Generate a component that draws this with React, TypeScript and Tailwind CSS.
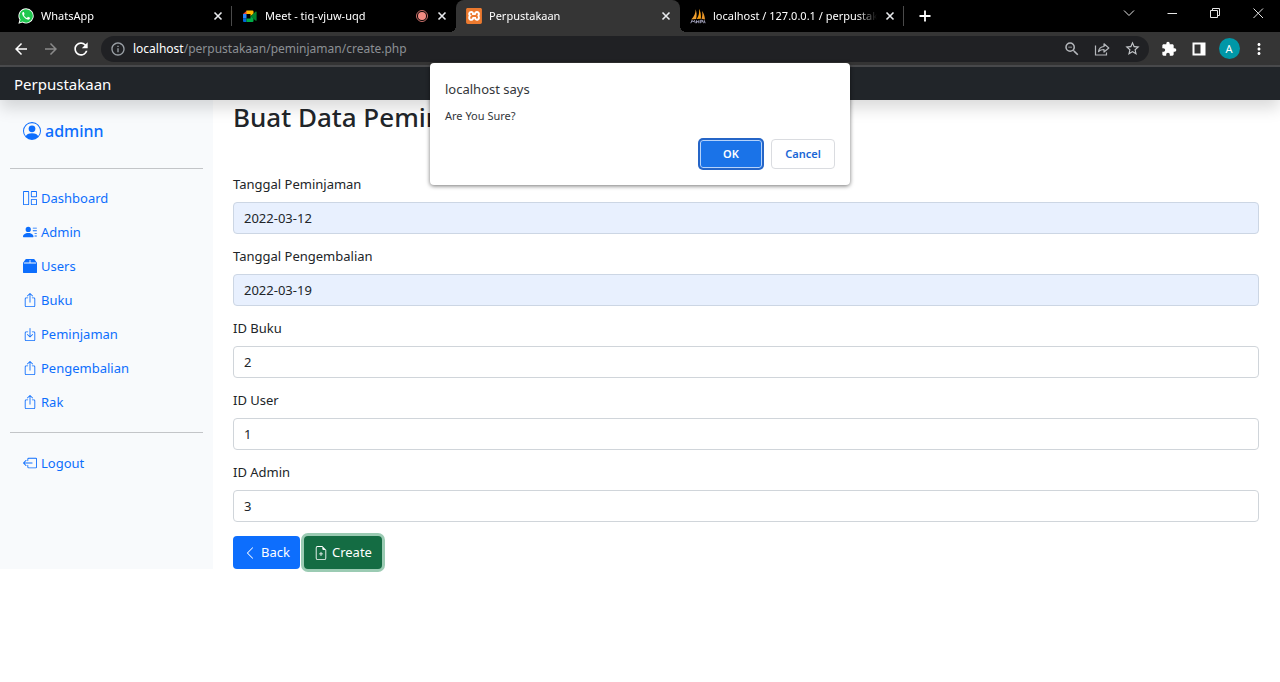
import type { ReactNode } from "react";
import {
  BsBox2Fill,
  BsBoxArrowInDown,
  BsBoxArrowLeft,
  BsBoxArrowUp,
  BsChevronLeft,
  BsFileEarmarkPlus,
  BsGrid1X2,
  BsPersonCircle,
  BsPersonLinesFill,
} from "react-icons/bs";
import {
  MdArrowBack,
  MdArrowForward,
  MdExtension,
  MdInfoOutline,
  MdMoreVert,
  MdRefresh,
  MdStarBorder,
  MdZoomOut,
} from "react-icons/md";
import { SiXampp } from "react-icons/si";

function WhatsAppLogo() {
  return (
    <svg viewBox="0 0 16 16" className="size-4 shrink-0" aria-hidden="true">
      <path d="M8.1.3a7.6 7.6 0 0 0-6.6 11.4L.4 15.7l4.1-1.1A7.6 7.6 0 1 0 8.1.3z" fill="#fff" />
      <path d="M8.1 1.2a6.7 6.7 0 0 0-5.6 10.4l-.8 2.8 2.9-.8A6.7 6.7 0 1 0 8.1 1.2z" fill="#1fc84f" />
      <path
        d="M5.9 4.3c-.2-.4-.4-.4-.7-.3-.8.4-1.2 1.2-1 2.1.5 2.4 2.7 4.7 5.2 5.5 1.3.4 2.3-.2 2.6-1.3.1-.4 0-.5-.3-.7l-1.4-.7c-.3-.1-.4 0-.6.2l-.5.7c-.2.2-.3.2-.6.1C7.3 9.3 6.4 8.4 5.9 7.3c-.1-.2 0-.4.1-.5l.5-.6c.1-.2.1-.3 0-.5z"
        fill="#fff"
      />
    </svg>
  );
}

function MeetLogo() {
  return (
    <svg viewBox="0 0 16 16" className="size-4 shrink-0" aria-hidden="true">
      <path d="M1 6 5 2.500V6z" fill="#ea4335" />
      <path d="M1 6h3.500v4.500H1z" fill="#2684fc" />
      <path d="M1 10.500h3.500V14H2a1 1 0 0 1-1-1z" fill="#0066da" />
      <path d="M4.500 2.500h6a1 1 0 0 1 1 1V6L8.500 8V6h-4z" fill="#ffba00" />
      <path d="M4.500 10.500h4V8l3 2.500V13a1 1 0 0 1-1 1h-6z" fill="#00ac47" />
      <path d="m8.500 8.200 5.200-4.600c.4-.3.900-.1.900.4v8.300c0 .5-.5.7-.9.4z" fill="#00832d" />
    </svg>
  );
}

function XamppLogo() {
  return (
    <span className="flex size-4 shrink-0 items-center justify-center rounded-sm bg-[linear-gradient(#fff,#fff)] bg-[length:12px_12px] bg-center bg-no-repeat">
      <SiXampp size={16} color="#ec7a2f" aria-hidden="true" />
    </span>
  );
}

function PhpMyAdminLogo() {
  return (
    <svg viewBox="0 0 16 16" className="size-4 shrink-0" aria-hidden="true">
      <path d="M5.600 1.200C5.700 5 4.200 8.500 1.200 11.500l4.900-.6c.8-3.200.7-6.500-.5-9.700z" fill="#f0a030" />
      <path d="M9 .8c.5 4-.2 7.400-2.300 10.200l4.200-.2C11.200 7 10.600 3.500 9 .8z" fill="#f89c0e" />
      <path d="M12 3c.6 2.800.4 5.400-.5 7.800l3.500.7C14.700 8.200 13.800 5.200 12 3z" fill="#e8962b" />
      <path
        d="M.8 15.200 2 12.300l1.200 1.700 1.300-1.700.8 2.900M6.500 15.200v-2.900M6.500 13.700h2.300M8.800 12.300v2.900M10.300 15.200v-2.900h2.200v1.600h-2M13.600 15.200l.7-2.700.8 2.700"
        fill="none"
        stroke="#9b9bb4"
        strokeWidth="1"
      />
    </svg>
  );
}

function RecordingDot() {
  return (
    <svg viewBox="0 0 14 14" className="size-3.5 shrink-0" role="img" aria-label="Recording">
      <circle cx="7" cy="7" r="5.500" fill="none" stroke="#c9706a" strokeWidth="1" />
      <circle cx="7" cy="7" r="4" fill="#f28b82" />
    </svg>
  );
}

function CrossIcon() {
  return (
    <svg viewBox="0 0 10 10" className="size-2.5" aria-hidden="true">
      <path d="m1.500 1.500 7 7m0-7-7 7" stroke="#e8eaed" strokeWidth="1.600" />
    </svg>
  );
}

type TabProps = {
  logo: ReactNode;
  title: string;
  active?: boolean;
  divider?: boolean;
  recording?: boolean;
};

function BrowserTab({ logo, title, active, divider, recording }: TabProps) {
  const look = active
    ? "rounded-t-lg bg-[#353535] before:absolute before:bottom-0 before:-left-1.5 before:size-1.5 before:bg-[radial-gradient(circle_at_top_left,transparent_6px,#353535_6px)] after:absolute after:bottom-0 after:-right-1.5 after:size-1.5 after:bg-[radial-gradient(circle_at_top_right,transparent_6px,#353535_6px)]"
    : "";
  return (
    <div className={`relative flex h-8 w-56 min-w-0 items-center pl-2.5 ${look}`}>
      {logo}
      <span className="ml-[7px] min-w-0 flex-1 overflow-hidden text-[11px] leading-4 whitespace-nowrap text-white [mask-image:linear-gradient(to_right,#000_88%,transparent)]">
        {title}
      </span>
      {recording && <RecordingDot />}
      <button type="button" aria-label={`Close ${title}`} className="flex w-[26px] shrink-0 justify-center">
        <CrossIcon />
      </button>
      <span className={`h-5 w-px ${divider ? "bg-[#4a4a4a]" : ""}`} />
    </div>
  );
}

function WindowButton({ label, children }: { label: string; children: ReactNode }) {
  return (
    <button type="button" aria-label={label} className="flex w-[43px] justify-center">
      <svg viewBox="0 0 12 12" className="size-3" fill="none" stroke="#e6e6e6" strokeWidth="1" aria-hidden="true">
        {children}
      </svg>
    </button>
  );
}

function TitleBar() {
  return (
    <div className="flex h-8 items-center bg-black pl-2">
      <BrowserTab logo={<WhatsAppLogo />} title="WhatsApp" divider />
      <BrowserTab logo={<MeetLogo />} title="Meet - tiq-vjuw-uqd" recording />
      <BrowserTab logo={<XamppLogo />} title="Perpustakaan" active />
      <BrowserTab logo={<PhpMyAdminLogo />} title="localhost / 127.0.0.1 / perpustakaan" divider />
      <button type="button" aria-label="New tab" className="flex w-[42px] justify-center">
        <svg viewBox="0 0 12 12" className="size-3" aria-hidden="true">
          <path d="M6 .5v11M.5 6h11" stroke="#fff" strokeWidth="1.800" />
        </svg>
      </button>
      <div className="ml-auto flex pr-px pb-1.5">
        <WindowButton label="Search tabs">
          <path d="m1 3.500 5 5 5-5" />
        </WindowButton>
        <WindowButton label="Minimize">
          <path d="M1.500 6.500h9.500" />
        </WindowButton>
        <WindowButton label="Restore">
          <path d="M1.500 3.500h7v7h-7zM3.500 3.500v-2h7v7h-2" />
        </WindowButton>
        <WindowButton label="Close">
          <path d="m1.500 1.500 9.500 9.500m0-9.500-9.500 9.500" />
        </WindowButton>
      </div>
    </div>
  );
}

function ToolButton({ label, children }: { label: string; children: ReactNode }) {
  return (
    <button type="button" aria-label={label} className="flex w-[30px] shrink-0 items-center justify-center">
      {children}
    </button>
  );
}

function Toolbar() {
  return (
    <div className="flex h-[35px] items-center border-b-2 border-[#4a4b4d] bg-[#353535] px-1.5 text-white">
      <ToolButton label="Back"><MdArrowBack size={18} /></ToolButton>
      <ToolButton label="Forward"><MdArrowForward size={18} className="text-[#8a8a8a]" /></ToolButton>
      <ToolButton label="Reload"><MdRefresh size={20} /></ToolButton>
      <div className="mx-[5px] flex h-[26px] min-w-0 flex-1 items-center rounded-full bg-[#202124] pr-0.5 pl-[9px] text-[#9aa0a6]">
        <MdInfoOutline size={16} className="shrink-0" />
        <p className="ml-[7px] min-w-0 flex-1 truncate text-xs leading-5 text-[#8c9094]">
          <span className="text-white">localhost</span>/perpustakaan/peminjaman/create.php
        </p>
        <ToolButton label="Zoom"><MdZoomOut size={18} className="text-[#b5b8bc]" /></ToolButton>
        <ToolButton label="Share">
          <svg viewBox="0 0 16 16" className="size-4" fill="none" stroke="#b5b8bc" strokeWidth="1.200" aria-hidden="true">
            <path d="M1.500 4.500v9.500h11v-2.500" />
            <path d="M4.500 10.500c.5-3.200 2.500-4.800 5.500-5V2.800l4.800 4.200L10 11V8.500c-2.500 0-4.200.6-5.500 2z" strokeLinejoin="round" />
          </svg>
        </ToolButton>
        <ToolButton label="Bookmark"><MdStarBorder size={17} className="text-[#c4c7ca]" /></ToolButton>
      </div>
      <ToolButton label="Extensions"><MdExtension size={16} /></ToolButton>
      <ToolButton label="Side panel">
        <svg viewBox="0 0 14 14" className="size-3.5" aria-hidden="true">
          <path d="M.5.500h13v13H.5zM2.500 2.500v9h6v-9z" fill="#fff" fillRule="evenodd" />
        </svg>
      </ToolButton>
      <ToolButton label="Profile">
        <span className="flex size-[21px] items-center justify-center rounded-full bg-[#0097a7] text-[11px] leading-none">A</span>
      </ToolButton>
      <ToolButton label="Menu"><MdMoreVert size={18} /></ToolButton>
    </div>
  );
}

const links = [
  { label: "Dashboard", icon: <BsGrid1X2 size={14} /> },
  { label: "Admin", icon: <BsPersonLinesFill size={14} /> },
  { label: "Users", icon: <BsBox2Fill size={14} /> },
  { label: "Buku", icon: <BsBoxArrowUp size={14} /> },
  { label: "Peminjaman", icon: <BsBoxArrowInDown size={14} /> },
  { label: "Pengembalian", icon: <BsBoxArrowUp size={14} /> },
  { label: "Rak", icon: <BsBoxArrowUp size={14} /> },
];

function NavLink({ label, icon }: { label: string; icon: ReactNode }) {
  return (
    <a href="#" className="flex h-[34px] items-center gap-1 px-[13px] text-[13px] leading-5">
      {icon}
      {label}
    </a>
  );
}

function Sidebar() {
  return (
    <aside className="w-[213px] shrink-0 bg-[#f8fafc] px-2.5 pt-4 text-[#0d6efd]">
      <a href="#" className="flex h-[30px] items-center gap-1 px-[13px] text-base font-medium">
        <BsPersonCircle size={18} />
        adminn
      </a>
      <hr className="mt-[22px] mb-3 border-[#c3c5c8]" />
      <nav>
        {links.map((link) => (
          <NavLink key={link.label} label={link.label} icon={link.icon} />
        ))}
      </nav>
      <hr className="my-[13px] border-[#c3c5c8]" />
      <NavLink label="Logout" icon={<BsBoxArrowLeft size={14} />} />
    </aside>
  );
}

const fields = [
  { id: "tanggal-peminjaman", label: "Tanggal Peminjaman", value: "2022-03-12", filled: true },
  { id: "tanggal-pengembalian", label: "Tanggal Pengembalian", value: "2022-03-19", filled: true },
  { id: "id-buku", label: "ID Buku", value: "2", filled: false },
  { id: "id-user", label: "ID User", value: "1", filled: false },
  { id: "id-admin", label: "ID Admin", value: "3", filled: false },
];

function LoanForm() {
  return (
    <main className="min-w-0 flex-1 pr-[21px] pl-5">
      <h1 className="text-[26px] leading-[34px] font-medium">Buat Data Peminjaman</h1>
      <form className="mt-10 flex flex-col gap-3" onSubmit={(event) => event.preventDefault()}>
        {fields.map((field) => (
          <div key={field.id} className="flex flex-col gap-2">
            <label htmlFor={field.id} className="text-[13px] leading-5">
              {field.label}
            </label>
            <input
              id={field.id}
              type="text"
              defaultValue={field.value}
              className={`h-8 w-full rounded border px-2.5 text-[13px] ${
                field.filled ? "border-[#ccd6e4] bg-[#e8f0fe]" : "border-[#d0d5da] bg-white"
              }`}
            />
          </div>
        ))}
        <div className="flex gap-1 pt-0.5 text-[13px] text-white">
          <a href="#" className="flex h-[33px] items-center gap-1 rounded bg-[#0d6efd] px-2.5">
            <BsChevronLeft size={14} />
            Back
          </a>
          <button
            type="submit"
            className="flex h-[33px] items-center gap-1 rounded bg-[#146c43] px-2.5 ring-3 ring-[#9bcbb3]"
          >
            <BsFileEarmarkPlus size={14} />
            Create
          </button>
        </div>
      </form>
    </main>
  );
}

function ConfirmDialog() {
  return (
    <div
      role="alertdialog"
      aria-labelledby="confirm-title"
      aria-describedby="confirm-text"
      className="absolute top-[63px] left-1/2 z-20 flex w-[420px] -translate-x-1/2 flex-col rounded bg-white px-[15px] py-4 text-[#33363a] shadow-[0_1px_4px_rgba(0,0,0,0.55)]"
    >
      <h2 id="confirm-title" className="text-[13px] leading-5">localhost says</h2>
      <p id="confirm-text" className="mt-2 text-[11px] leading-[18px]">Are You Sure?</p>
      <div className="mt-3.5 flex justify-end gap-2 text-[11px] font-semibold">
        <button
          type="button"
          className="h-[30px] w-16 rounded-sm border border-[#2565c7] bg-[#1a73e8] text-white ring-1 ring-[#2565c7] inset-ring-1 inset-ring-[#b5d3fb]"
        >
          OK
        </button>
        <button type="button" className="h-[30px] w-16 rounded border border-[#dadce0] text-[#1a66d6]">
          Cancel
        </button>
      </div>
    </div>
  );
}

export default function App() {
  return (
    <div className="relative min-h-screen overflow-x-hidden bg-white font-['Noto_Sans',sans-serif] text-[#212529]">
      <TitleBar />
      <Toolbar />
      <header className="relative z-10 flex h-[33px] items-center bg-[#212529] px-3.5 shadow-[0_8px_16px_rgba(0,0,0,0.15)]">
        <a href="#" className="text-[15px] leading-6 text-white">Perpustakaan</a>
      </header>
      <div className="flex">
        <Sidebar />
        <LoanForm />
      </div>
      <ConfirmDialog />
    </div>
  );
}
